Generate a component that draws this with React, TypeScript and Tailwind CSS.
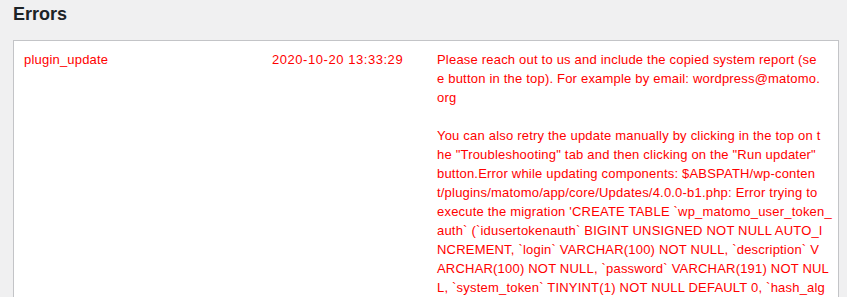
import React from "react";

const lines = [
  "Please reach out to us and include the copied system report (se",
  "e button in the top). For example by email: wordpress@matomo.",
  "org",
  "\u00a0",
  "You can also retry the update manually by clicking in the top on t",
  "he \"Troubleshooting\" tab and then clicking on the \"Run updater\"",
  "button.Error while updating components: $ABSPATH/wp-conten",
  "t/plugins/matomo/app/core/Updates/4.0.0-b1.php: Error trying to",
  "execute the migration 'CREATE TABLE `wp_matomo_user_token_",
  "auth` (`idusertokenauth` BIGINT UNSIGNED NOT NULL AUTO_I",
  "NCREMENT, `login` VARCHAR(100) NOT NULL, `description` V",
  "ARCHAR(100) NOT NULL, `password` VARCHAR(191) NOT NUL",
  "L, `system_token` TINYINT(1) NOT NULL DEFAULT 0, `hash_alg",
];

export default function App() {
  return (
    <div
      className="w-[847px] h-[297px] overflow-hidden bg-[#f0f0f1] pl-[13px] pr-[8px]"
      style={{ fontFamily: '"Liberation Sans", Arial, sans-serif' }}
    >
      <h2 className="pt-[4px] h-[40px] text-[18px] leading-[20px] font-bold text-[#1d2327]">
        Errors
      </h2>
      <div className="bg-white border border-[#c3c4c7] flex pl-[10px] pt-[9px] text-[13px] leading-[19px] tracking-[0.2px] text-[#ff0000]">
        <div className="w-[248px] shrink-0">plugin_update</div>
        <div className="w-[165px] shrink-0 tracking-[0.55px]">2020-10-20 13:33:29</div>
        <div className="flex-1">
          {lines.map((l, i) => (
            <div key={i} className="whitespace-pre">
              {l}
            </div>
          ))}
        </div>
      </div>
    </div>
  );
}
